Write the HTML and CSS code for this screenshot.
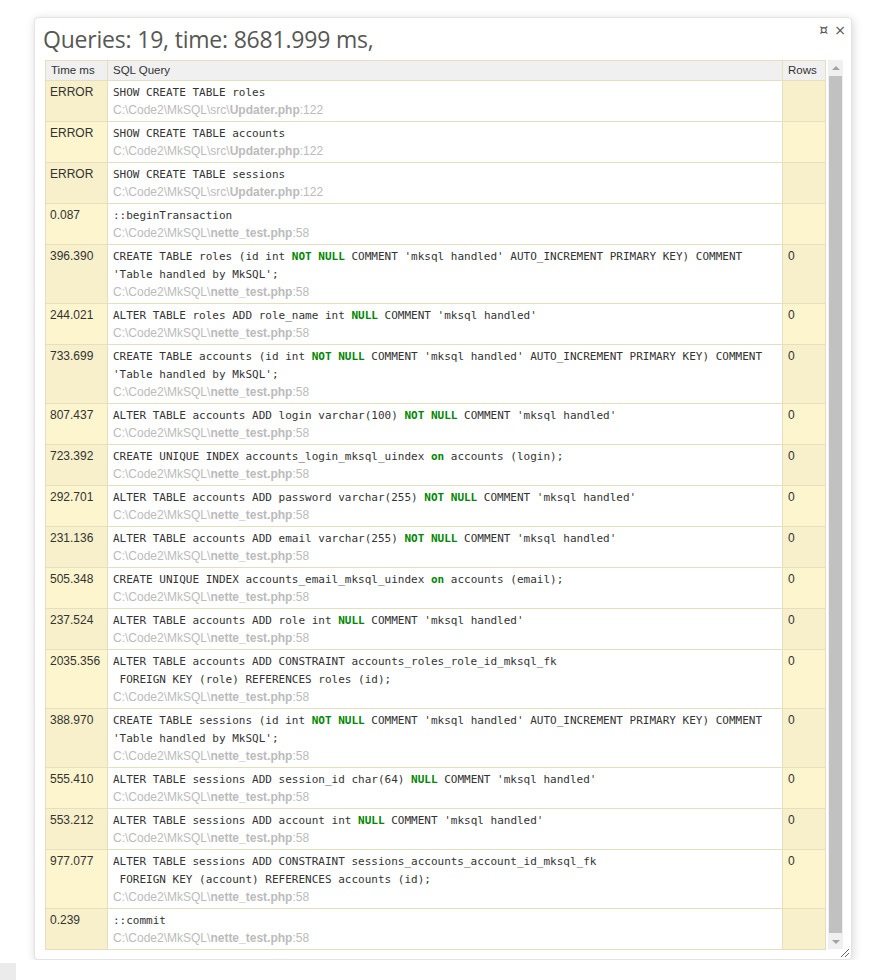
FILE: index.html
```html
<!DOCTYPE html>
<html>
<head>
<meta charset="utf-8">
<title>Tracy Database Panel</title>
<link rel="stylesheet" href="styles.css">
</head>
<body>
<div class="panel">
  <div class="icons"><a class="ic">¤</a><a class="ic">×</a></div>
  <h1>Queries: 19, time: 8681.999 ms,</h1>
  <div class="scroll">
    <table class="q">
      <colgroup><col class="c-time"><col class="c-sql"><col class="c-rows"></colgroup>
      <tr><th>Time ms</th><th>SQL Query</th><th>Rows</th></tr>
      <tr><td class="t">ERROR</td><td class="sql"><code>SHOW CREATE TABLE roles</code><br><span class="src">C:\Code2\MkSQL\src\<b>Updater.php</b>:122</span></td><td class="r"></td></tr>
      <tr><td class="t">ERROR</td><td class="sql"><code>SHOW CREATE TABLE accounts</code><br><span class="src">C:\Code2\MkSQL\src\<b>Updater.php</b>:122</span></td><td class="r"></td></tr>
      <tr><td class="t">ERROR</td><td class="sql"><code>SHOW CREATE TABLE sessions</code><br><span class="src">C:\Code2\MkSQL\src\<b>Updater.php</b>:122</span></td><td class="r"></td></tr>
      <tr><td class="t">0.087</td><td class="sql"><code>::beginTransaction</code><br><span class="src">C:\Code2\MkSQL\<b>nette_test.php</b>:58</span></td><td class="r"></td></tr>
      <tr><td class="t">396.390</td><td class="sql"><code>CREATE TABLE roles (id int <strong>NOT NULL</strong> COMMENT 'mksql handled' AUTO_INCREMENT PRIMARY KEY) COMMENT<br>'Table handled by MkSQL';</code><br><span class="src">C:\Code2\MkSQL\<b>nette_test.php</b>:58</span></td><td class="r">0</td></tr>
      <tr><td class="t">244.021</td><td class="sql"><code>ALTER TABLE roles ADD role_name int <strong>NULL</strong> COMMENT 'mksql handled'</code><br><span class="src">C:\Code2\MkSQL\<b>nette_test.php</b>:58</span></td><td class="r">0</td></tr>
      <tr><td class="t">733.699</td><td class="sql"><code>CREATE TABLE accounts (id int <strong>NOT NULL</strong> COMMENT 'mksql handled' AUTO_INCREMENT PRIMARY KEY) COMMENT<br>'Table handled by MkSQL';</code><br><span class="src">C:\Code2\MkSQL\<b>nette_test.php</b>:58</span></td><td class="r">0</td></tr>
      <tr><td class="t">807.437</td><td class="sql"><code>ALTER TABLE accounts ADD login varchar(100) <strong>NOT NULL</strong> COMMENT 'mksql handled'</code><br><span class="src">C:\Code2\MkSQL\<b>nette_test.php</b>:58</span></td><td class="r">0</td></tr>
      <tr><td class="t">723.392</td><td class="sql"><code>CREATE UNIQUE INDEX accounts_login_mksql_uindex <strong>on</strong> accounts (login);</code><br><span class="src">C:\Code2\MkSQL\<b>nette_test.php</b>:58</span></td><td class="r">0</td></tr>
      <tr><td class="t">292.701</td><td class="sql"><code>ALTER TABLE accounts ADD password varchar(255) <strong>NOT NULL</strong> COMMENT 'mksql handled'</code><br><span class="src">C:\Code2\MkSQL\<b>nette_test.php</b>:58</span></td><td class="r">0</td></tr>
      <tr><td class="t">231.136</td><td class="sql"><code>ALTER TABLE accounts ADD email varchar(255) <strong>NOT NULL</strong> COMMENT 'mksql handled'</code><br><span class="src">C:\Code2\MkSQL\<b>nette_test.php</b>:58</span></td><td class="r">0</td></tr>
      <tr><td class="t">505.348</td><td class="sql"><code>CREATE UNIQUE INDEX accounts_email_mksql_uindex <strong>on</strong> accounts (email);</code><br><span class="src">C:\Code2\MkSQL\<b>nette_test.php</b>:58</span></td><td class="r">0</td></tr>
      <tr><td class="t">237.524</td><td class="sql"><code>ALTER TABLE accounts ADD role int <strong>NULL</strong> COMMENT 'mksql handled'</code><br><span class="src">C:\Code2\MkSQL\<b>nette_test.php</b>:58</span></td><td class="r">0</td></tr>
      <tr><td class="t">2035.356</td><td class="sql"><code>ALTER TABLE accounts ADD CONSTRAINT accounts_roles_role_id_mksql_fk<br>&nbsp;FOREIGN KEY (role) REFERENCES roles (id);</code><br><span class="src">C:\Code2\MkSQL\<b>nette_test.php</b>:58</span></td><td class="r">0</td></tr>
      <tr><td class="t">388.970</td><td class="sql"><code>CREATE TABLE sessions (id int <strong>NOT NULL</strong> COMMENT 'mksql handled' AUTO_INCREMENT PRIMARY KEY) COMMENT<br>'Table handled by MkSQL';</code><br><span class="src">C:\Code2\MkSQL\<b>nette_test.php</b>:58</span></td><td class="r">0</td></tr>
      <tr><td class="t">555.410</td><td class="sql"><code>ALTER TABLE sessions ADD session_id char(64) <strong>NULL</strong> COMMENT 'mksql handled'</code><br><span class="src">C:\Code2\MkSQL\<b>nette_test.php</b>:58</span></td><td class="r">0</td></tr>
      <tr><td class="t">553.212</td><td class="sql"><code>ALTER TABLE sessions ADD account int <strong>NULL</strong> COMMENT 'mksql handled'</code><br><span class="src">C:\Code2\MkSQL\<b>nette_test.php</b>:58</span></td><td class="r">0</td></tr>
      <tr><td class="t">977.077</td><td class="sql"><code>ALTER TABLE sessions ADD CONSTRAINT sessions_accounts_account_id_mksql_fk<br>&nbsp;FOREIGN KEY (account) REFERENCES accounts (id);</code><br><span class="src">C:\Code2\MkSQL\<b>nette_test.php</b>:58</span></td><td class="r">0</td></tr>
      <tr><td class="t">0.239</td><td class="sql"><code>::commit</code><br><span class="src">C:\Code2\MkSQL\<b>nette_test.php</b>:58</span></td><td class="r"></td></tr>
    </table>
    <div class="sbar">
      <div class="arrow up"></div>
      <div class="thumb"></div>
      <div class="arrow down"></div>
    </div>
  </div>
  <svg class="resize" width="10" height="10" viewBox="0 0 10 10"><path d="M1 9 L9 1 M5 9 L9 5" stroke="#666" stroke-width="1" fill="none"/></svg>
</div>
<div class="bar"></div>
</body>
</html>
```
FILE: styles.css
```css
html, body { margin: 0; padding: 0; background: #fff; }
body { font-family: "Liberation Sans", Arial, sans-serif; font-size: 12px; color: #333; }

.panel {
  position: relative;
  margin: 17px 0 0 34px;
  width: 796px;
  height: 941px;
  padding: 0 10px;
  background: #fff;
  border: 1px solid #e4e4e4;
  border-radius: 4px;
  box-shadow: 1px 2px 10px rgba(0,0,0,0.16);
}

.icons { position: absolute; top: 3px; right: 5px; display: flex; gap: 6px; align-items: center; }
.ic { font-family: "DejaVu Sans", sans-serif; font-size: 14px; line-height: 18px; color: #555; }

h1 {
  margin: 0 0 0 -2px;
  height: 42px;
  line-height: 42px;
  font-family: "Open Sans", "Noto Sans", sans-serif;
  font-weight: normal;
  font-size: 23px;
  color: #575753;
  letter-spacing: -0.2px;
}

.scroll { display: flex; height: 889px; }

table.q {
  border-collapse: collapse;
  table-layout: fixed;
  width: 780px;
  align-self: flex-start;
}
.c-time { width: 62px; }
.c-sql { width: 675px; }
.c-rows { width: 43px; }

.q th, .q td {
  border: 1px solid #e6dfbf;
  text-align: left;
  vertical-align: top;
}
.q th {
  background: #f0f0f0;
  font-weight: normal;
  font-size: 11.5px;
  line-height: 19px;
  padding: 0 5px 0 5px;
  color: #333;
}
.q td {
  padding: 2px 5px;
  line-height: 18px;
  background: #fdf5ce;
}
.q tr:nth-child(2n) td { background: #f7f0cb; }
.q td.t { padding-left: 4px; }
.q tr td.sql { background: #fff; }
.q code {
  font-family: "DejaVu Sans Mono", monospace;
  font-size: 11px;
  line-height: 12px;
  color: #333;
}
.q code strong { color: #080; font-weight: bold; }
.src { color: #bbb; }
.src b { font-weight: bold; }

.sbar {
  width: 15px;
  margin-left: 2px;
  background: #f0f0f0;
  display: flex;
  flex-direction: column;
  align-items: center;
}
.arrow { height: 15px; width: 15px; display: flex; align-items: center; justify-content: center; }
.arrow::before { content: ""; width: 0; height: 0; border-left: 4px solid transparent; border-right: 4px solid transparent; }
.arrow.up::before { border-bottom: 4px solid #a3a3a3; }
.arrow.down::before { border-top: 4px solid #a3a3a3; }
.thumb { flex: 1; width: 13px; background: #c1c1c1; margin: 1px 0 1px; }

.resize { position: absolute; right: 1px; bottom: 1px; }

.bar { position: fixed; left: 0; bottom: 0; width: 16px; height: 17px; background: #ebebeb; }
```
